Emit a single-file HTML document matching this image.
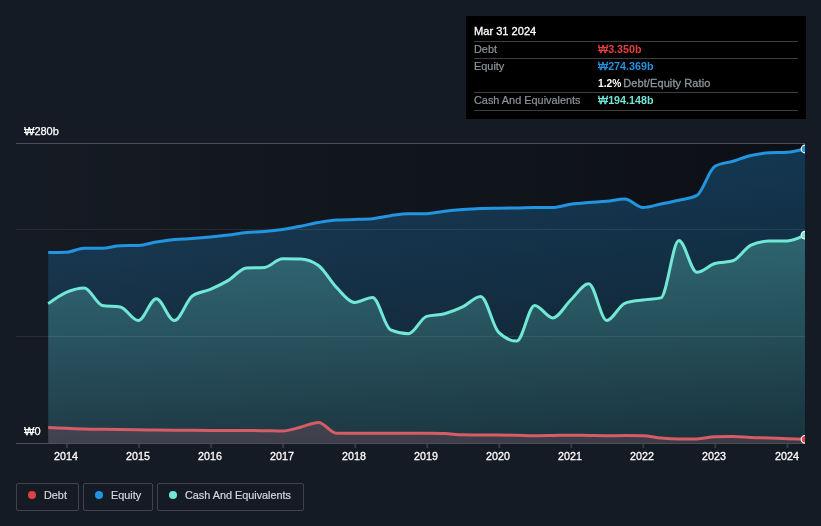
<!DOCTYPE html>
<html lang="en">
<head>
<meta charset="utf-8">
<title>Debt to Equity History</title>
<style>
html,body{margin:0;padding:0;}
body{width:821px;height:526px;background:#151b24;overflow:hidden;position:relative;font-family:"Liberation Sans","Noto Sans CJK KR",sans-serif;color:#fff;}
svg{position:absolute;left:0;top:0;}
.ylab,.xlab,.tip span,.tip .title,.legend{will-change:opacity;opacity:0.999;}
.ylab{position:absolute;left:24px;font-size:11px;line-height:12px;color:#fff;white-space:nowrap;-webkit-text-stroke:0.25px #fff;}
.xlab{position:absolute;top:449.2px;width:60px;margin-left:-30px;text-align:center;font-size:11px;line-height:14px;color:#fff;transform:scaleX(0.975);-webkit-text-stroke:0.3px #fff;}
.tip{position:absolute;left:466px;top:16px;width:340px;height:103px;background:#000;}
.tip .title{position:absolute;left:8px;top:8.3px;font-size:11px;line-height:14px;color:#fff;transform:scaleX(1.008);transform-origin:0 0;white-space:nowrap;-webkit-text-stroke:0.3px #fff;}
.tip .ln{position:absolute;left:8px;right:8px;height:1px;background:#3b3e43;}
.tip span{position:absolute;white-space:nowrap;transform-origin:0 0;font-size:11px;line-height:14px;}
.tip .k{left:8px;color:#90969d;-webkit-text-stroke:0.2px #90969d;transform:scaleX(0.99);}
.tip .r{left:157.2px;color:#90969d;-webkit-text-stroke:0.3px #90969d;letter-spacing:0.1px;}
.tip .v i{font-style:normal;font-weight:normal;-webkit-text-stroke:0.3px;}
.tip .v{left:131.7px;font-weight:bold;transform:scaleX(0.975);}
.legend{position:absolute;top:483px;height:26px;border:1px solid #3f444d;border-radius:2px;font-size:11px;line-height:14px;color:#d5d8dc;box-sizing:content-box;}
.legend i{position:absolute;left:11px;top:7px;width:8px;height:8px;border-radius:50%;}
.legend span{position:absolute;-webkit-text-stroke:0.2px #d5d8dc;left:26.8px;top:4.1px;white-space:nowrap;transform:scaleX(0.985);transform-origin:0 0;}
</style>
</head>
<body>
<svg width="821" height="526" viewBox="0 0 821 526">
<defs>
<linearGradient id="bgG" x1="0" y1="0" x2="1" y2="0"><stop offset="0" stop-color="#000" stop-opacity="0"/><stop offset="1" stop-color="#000" stop-opacity="0.42"/></linearGradient>
<linearGradient id="eqG" x1="0" y1="143" x2="0" y2="443" gradientUnits="userSpaceOnUse"><stop offset="0" stop-color="#2394df" stop-opacity="0.30"/><stop offset="1" stop-color="#2394df" stop-opacity="0.10"/></linearGradient>
<linearGradient id="caG" x1="0" y1="143" x2="0" y2="443" gradientUnits="userSpaceOnUse"><stop offset="0" stop-color="#71e7d6" stop-opacity="0.38"/><stop offset="1" stop-color="#71e7d6" stop-opacity="0.10"/></linearGradient>
<linearGradient id="deG" x1="0" y1="143" x2="0" y2="443" gradientUnits="userSpaceOnUse"><stop offset="0" stop-color="#f06478" stop-opacity="0.16"/><stop offset="1" stop-color="#f06478" stop-opacity="0.16"/></linearGradient>
<clipPath id="clip"><rect x="16" y="138" width="789" height="312"/></clipPath>
</defs>
<rect x="16" y="143" width="789" height="300" fill="url(#bgG)"/>
<g clip-path="url(#clip)">
<path d="M48.20,252.60C54.21,252.55,60.21,252.50,66.22,252.30C72.23,252.10,78.23,248.20,84.24,248.20C90.24,248.20,96.25,248.20,102.26,248.20C108.26,248.20,114.27,245.83,120.28,245.70C126.28,245.57,132.29,245.63,138.30,245.50C144.30,245.37,150.31,243.00,156.31,242.00C162.32,241.00,168.33,240.08,174.33,239.50C180.34,238.92,186.35,238.92,192.35,238.50C198.36,238.08,204.37,237.58,210.37,237.00C216.38,236.42,222.38,235.75,228.39,235.00C234.40,234.25,240.40,233.08,246.41,232.50C252.42,231.92,258.42,232.00,264.43,231.50C270.43,231.00,276.44,230.38,282.45,229.50C288.45,228.62,294.46,227.37,300.47,226.20C306.47,225.03,312.48,223.53,318.49,222.50C324.49,221.47,330.50,220.33,336.50,220.00C342.51,219.67,348.52,219.72,354.52,219.50C360.53,219.28,366.54,219.23,372.54,218.70C378.55,218.17,384.56,216.53,390.56,215.70C396.57,214.87,402.57,213.70,408.58,213.70C414.59,213.70,420.59,213.70,426.60,213.70C432.61,213.70,438.61,211.90,444.62,211.20C450.63,210.50,456.63,209.95,462.64,209.50C468.64,209.05,474.65,208.70,480.66,208.50C486.66,208.30,492.67,208.28,498.68,208.20C504.68,208.12,510.69,208.12,516.70,208.00C522.70,207.88,528.71,207.50,534.71,207.50C540.72,207.50,546.73,207.50,552.73,207.50C558.74,207.50,564.75,205.03,570.75,204.20C576.76,203.37,582.77,202.98,588.77,202.50C594.78,202.02,600.78,201.87,606.79,201.30C612.80,200.73,618.80,199.10,624.81,199.10C630.82,199.10,636.82,207.50,642.83,207.50C648.83,207.50,654.84,205.22,660.85,204.00C666.85,202.78,672.86,201.63,678.87,200.20C684.87,198.77,690.88,198.60,696.89,195.40C702.89,192.20,708.90,169.70,714.90,166.30C720.91,162.90,726.92,163.00,732.92,161.20C738.93,159.40,744.94,156.90,750.94,155.50C756.95,154.10,762.96,153.13,768.96,152.80C774.97,152.47,780.97,152.63,786.98,152.30C792.99,151.97,798.99,150.43,805.00,148.90L805.00,443L48.20,443Z" fill="url(#eqG)"/>
<path d="M48.20,303.70C54.21,299.36,60.21,295.02,66.22,292.40C72.23,289.78,78.23,288.00,84.24,288.00C90.24,288.00,96.25,304.33,102.26,305.40C108.26,306.47,114.27,305.93,120.28,307.00C126.28,308.07,132.29,320.60,138.30,320.60C144.30,320.60,150.31,298.70,156.31,298.70C162.32,298.70,168.33,320.60,174.33,320.60C180.34,320.60,186.35,300.40,192.35,296.00C198.36,291.60,204.37,292.00,210.37,289.40C216.38,286.80,222.38,283.98,228.39,280.40C234.40,276.82,240.40,268.23,246.41,267.90C252.42,267.57,258.42,267.73,264.43,267.40C270.43,267.07,276.44,258.80,282.45,258.80C288.45,258.80,294.46,258.83,300.47,258.90C306.47,258.97,312.48,261.10,318.49,265.50C324.49,269.90,330.50,281.25,336.50,287.40C342.51,293.55,348.52,302.40,354.52,302.40C360.53,302.40,366.54,297.40,372.54,297.40C378.55,297.40,384.56,327.37,390.56,329.90C396.57,332.43,402.57,333.70,408.58,333.70C414.59,333.70,420.59,318.20,426.60,316.40C432.61,314.60,438.61,315.28,444.62,313.70C450.63,312.12,456.63,309.77,462.64,306.90C468.64,304.03,474.65,296.50,480.66,296.50C486.66,296.50,492.67,326.60,498.68,332.40C504.68,338.20,510.69,341.10,516.70,341.10C522.70,341.10,528.71,305.40,534.71,305.40C540.72,305.40,546.73,317.90,552.73,317.90C558.74,317.90,564.75,305.70,570.75,300.00C576.76,294.30,582.77,283.70,588.77,283.70C594.78,283.70,600.78,320.50,606.79,320.50C612.80,320.50,618.80,305.50,624.81,303.30C630.82,301.10,636.82,300.90,642.83,300.00C648.83,299.10,654.84,299.30,660.85,297.90C666.85,296.50,672.86,240.50,678.87,240.50C684.87,240.50,690.88,272.30,696.89,272.30C702.89,272.30,708.90,265.30,714.90,263.50C720.91,261.70,726.92,262.60,732.92,260.80C738.93,259.00,744.94,247.77,750.94,245.10C756.95,242.43,762.96,241.10,768.96,241.10C774.97,241.10,780.97,241.10,786.98,241.10C792.99,241.10,798.99,238.15,805.00,235.20L805.00,443L48.20,443Z" fill="url(#caG)"/>
<path d="M48.20,427.50C54.21,427.78,60.21,428.05,66.22,428.30C72.23,428.55,78.23,428.83,84.24,429.00C90.24,429.17,96.25,429.22,102.26,429.30C108.26,429.38,114.27,429.42,120.28,429.50C126.28,429.58,132.29,429.72,138.30,429.80C144.30,429.88,150.31,429.93,156.31,430.00C162.32,430.07,168.33,430.15,174.33,430.20C180.34,430.25,186.35,430.27,192.35,430.30C198.36,430.33,204.37,430.37,210.37,430.40C216.38,430.43,222.38,430.50,228.39,430.50C234.40,430.50,240.40,430.50,246.41,430.50C252.42,430.50,258.42,430.62,264.43,430.70C270.43,430.78,276.44,431.00,282.45,431.00C288.45,431.00,294.46,428.62,300.47,427.20C306.47,425.78,312.48,422.50,318.49,422.50C324.49,422.50,330.50,433.20,336.50,433.20C342.51,433.20,348.52,433.20,354.52,433.20C360.53,433.20,366.54,433.20,372.54,433.20C378.55,433.20,384.56,433.20,390.56,433.20C396.57,433.20,402.57,433.20,408.58,433.20C414.59,433.20,420.59,433.23,426.60,433.30C432.61,433.37,438.61,433.40,444.62,433.60C450.63,433.80,456.63,434.67,462.64,434.80C468.64,434.93,474.65,435.00,480.66,435.00C486.66,435.00,492.67,435.00,498.68,435.00C504.68,435.00,510.69,435.18,516.70,435.30C522.70,435.42,528.71,435.70,534.71,435.70C540.72,435.70,546.73,435.58,552.73,435.50C558.74,435.42,564.75,435.20,570.75,435.20C576.76,435.20,582.77,435.42,588.77,435.50C594.78,435.58,600.78,435.70,606.79,435.70C612.80,435.70,618.80,435.60,624.81,435.60C630.82,435.60,636.82,435.67,642.83,435.80C648.83,435.93,654.84,437.48,660.85,438.00C666.85,438.52,672.86,438.90,678.87,438.90C684.87,438.90,690.88,438.90,696.89,438.90C702.89,438.90,708.90,436.90,714.90,436.70C720.91,436.50,726.92,436.40,732.92,436.40C738.93,436.40,744.94,437.33,750.94,437.60C756.95,437.87,762.96,437.82,768.96,438.00C774.97,438.18,780.97,438.50,786.98,438.70C792.99,438.90,798.99,439.05,805.00,439.20L805.00,443L48.20,443Z" fill="url(#deG)"/>
<g stroke="#ffffff" stroke-opacity="0.085" stroke-width="1">
<line x1="16" x2="805" y1="229.5" y2="229.5"/>
<line x1="16" x2="805" y1="336.5" y2="336.5"/>
</g>
<line x1="16" x2="805" y1="143.5" y2="143.5" stroke="#4a4f57" stroke-width="1"/>
<line x1="16" x2="805" y1="443.5" y2="443.5" stroke="#4a4f57" stroke-width="1"/>
<path d="M48.20,252.60C54.21,252.55,60.21,252.50,66.22,252.30C72.23,252.10,78.23,248.20,84.24,248.20C90.24,248.20,96.25,248.20,102.26,248.20C108.26,248.20,114.27,245.83,120.28,245.70C126.28,245.57,132.29,245.63,138.30,245.50C144.30,245.37,150.31,243.00,156.31,242.00C162.32,241.00,168.33,240.08,174.33,239.50C180.34,238.92,186.35,238.92,192.35,238.50C198.36,238.08,204.37,237.58,210.37,237.00C216.38,236.42,222.38,235.75,228.39,235.00C234.40,234.25,240.40,233.08,246.41,232.50C252.42,231.92,258.42,232.00,264.43,231.50C270.43,231.00,276.44,230.38,282.45,229.50C288.45,228.62,294.46,227.37,300.47,226.20C306.47,225.03,312.48,223.53,318.49,222.50C324.49,221.47,330.50,220.33,336.50,220.00C342.51,219.67,348.52,219.72,354.52,219.50C360.53,219.28,366.54,219.23,372.54,218.70C378.55,218.17,384.56,216.53,390.56,215.70C396.57,214.87,402.57,213.70,408.58,213.70C414.59,213.70,420.59,213.70,426.60,213.70C432.61,213.70,438.61,211.90,444.62,211.20C450.63,210.50,456.63,209.95,462.64,209.50C468.64,209.05,474.65,208.70,480.66,208.50C486.66,208.30,492.67,208.28,498.68,208.20C504.68,208.12,510.69,208.12,516.70,208.00C522.70,207.88,528.71,207.50,534.71,207.50C540.72,207.50,546.73,207.50,552.73,207.50C558.74,207.50,564.75,205.03,570.75,204.20C576.76,203.37,582.77,202.98,588.77,202.50C594.78,202.02,600.78,201.87,606.79,201.30C612.80,200.73,618.80,199.10,624.81,199.10C630.82,199.10,636.82,207.50,642.83,207.50C648.83,207.50,654.84,205.22,660.85,204.00C666.85,202.78,672.86,201.63,678.87,200.20C684.87,198.77,690.88,198.60,696.89,195.40C702.89,192.20,708.90,169.70,714.90,166.30C720.91,162.90,726.92,163.00,732.92,161.20C738.93,159.40,744.94,156.90,750.94,155.50C756.95,154.10,762.96,153.13,768.96,152.80C774.97,152.47,780.97,152.63,786.98,152.30C792.99,151.97,798.99,150.43,805.00,148.90" fill="none" stroke="#2394df" stroke-width="3" stroke-linejoin="round"/>
<path d="M48.20,303.70C54.21,299.36,60.21,295.02,66.22,292.40C72.23,289.78,78.23,288.00,84.24,288.00C90.24,288.00,96.25,304.33,102.26,305.40C108.26,306.47,114.27,305.93,120.28,307.00C126.28,308.07,132.29,320.60,138.30,320.60C144.30,320.60,150.31,298.70,156.31,298.70C162.32,298.70,168.33,320.60,174.33,320.60C180.34,320.60,186.35,300.40,192.35,296.00C198.36,291.60,204.37,292.00,210.37,289.40C216.38,286.80,222.38,283.98,228.39,280.40C234.40,276.82,240.40,268.23,246.41,267.90C252.42,267.57,258.42,267.73,264.43,267.40C270.43,267.07,276.44,258.80,282.45,258.80C288.45,258.80,294.46,258.83,300.47,258.90C306.47,258.97,312.48,261.10,318.49,265.50C324.49,269.90,330.50,281.25,336.50,287.40C342.51,293.55,348.52,302.40,354.52,302.40C360.53,302.40,366.54,297.40,372.54,297.40C378.55,297.40,384.56,327.37,390.56,329.90C396.57,332.43,402.57,333.70,408.58,333.70C414.59,333.70,420.59,318.20,426.60,316.40C432.61,314.60,438.61,315.28,444.62,313.70C450.63,312.12,456.63,309.77,462.64,306.90C468.64,304.03,474.65,296.50,480.66,296.50C486.66,296.50,492.67,326.60,498.68,332.40C504.68,338.20,510.69,341.10,516.70,341.10C522.70,341.10,528.71,305.40,534.71,305.40C540.72,305.40,546.73,317.90,552.73,317.90C558.74,317.90,564.75,305.70,570.75,300.00C576.76,294.30,582.77,283.70,588.77,283.70C594.78,283.70,600.78,320.50,606.79,320.50C612.80,320.50,618.80,305.50,624.81,303.30C630.82,301.10,636.82,300.90,642.83,300.00C648.83,299.10,654.84,299.30,660.85,297.90C666.85,296.50,672.86,240.50,678.87,240.50C684.87,240.50,690.88,272.30,696.89,272.30C702.89,272.30,708.90,265.30,714.90,263.50C720.91,261.70,726.92,262.60,732.92,260.80C738.93,259.00,744.94,247.77,750.94,245.10C756.95,242.43,762.96,241.10,768.96,241.10C774.97,241.10,780.97,241.10,786.98,241.10C792.99,241.10,798.99,238.15,805.00,235.20" fill="none" stroke="#71e7d6" stroke-width="3" stroke-linejoin="round"/>
<path d="M48.20,427.50C54.21,427.78,60.21,428.05,66.22,428.30C72.23,428.55,78.23,428.83,84.24,429.00C90.24,429.17,96.25,429.22,102.26,429.30C108.26,429.38,114.27,429.42,120.28,429.50C126.28,429.58,132.29,429.72,138.30,429.80C144.30,429.88,150.31,429.93,156.31,430.00C162.32,430.07,168.33,430.15,174.33,430.20C180.34,430.25,186.35,430.27,192.35,430.30C198.36,430.33,204.37,430.37,210.37,430.40C216.38,430.43,222.38,430.50,228.39,430.50C234.40,430.50,240.40,430.50,246.41,430.50C252.42,430.50,258.42,430.62,264.43,430.70C270.43,430.78,276.44,431.00,282.45,431.00C288.45,431.00,294.46,428.62,300.47,427.20C306.47,425.78,312.48,422.50,318.49,422.50C324.49,422.50,330.50,433.20,336.50,433.20C342.51,433.20,348.52,433.20,354.52,433.20C360.53,433.20,366.54,433.20,372.54,433.20C378.55,433.20,384.56,433.20,390.56,433.20C396.57,433.20,402.57,433.20,408.58,433.20C414.59,433.20,420.59,433.23,426.60,433.30C432.61,433.37,438.61,433.40,444.62,433.60C450.63,433.80,456.63,434.67,462.64,434.80C468.64,434.93,474.65,435.00,480.66,435.00C486.66,435.00,492.67,435.00,498.68,435.00C504.68,435.00,510.69,435.18,516.70,435.30C522.70,435.42,528.71,435.70,534.71,435.70C540.72,435.70,546.73,435.58,552.73,435.50C558.74,435.42,564.75,435.20,570.75,435.20C576.76,435.20,582.77,435.42,588.77,435.50C594.78,435.58,600.78,435.70,606.79,435.70C612.80,435.70,618.80,435.60,624.81,435.60C630.82,435.60,636.82,435.67,642.83,435.80C648.83,435.93,654.84,437.48,660.85,438.00C666.85,438.52,672.86,438.90,678.87,438.90C684.87,438.90,690.88,438.90,696.89,438.90C702.89,438.90,708.90,436.90,714.90,436.70C720.91,436.50,726.92,436.40,732.92,436.40C738.93,436.40,744.94,437.33,750.94,437.60C756.95,437.87,762.96,437.82,768.96,438.00C774.97,438.18,780.97,438.50,786.98,438.70C792.99,438.90,798.99,439.05,805.00,439.20" fill="none" stroke="#d85c65" stroke-width="3" stroke-linejoin="round"/>
<circle cx="805" cy="149" r="3.8" fill="#2394df" stroke="#fff" stroke-width="1.2"/>
<circle cx="805" cy="235.2" r="3.8" fill="#71e7d6" stroke="#fff" stroke-width="1.2"/>
<circle cx="805" cy="439.3" r="3.8" fill="#e64141" stroke="#fff" stroke-width="1.2"/>
</g>
<g fill="#4a4f57" fill-opacity="0.6">
<rect x="66.00" y="444" width="2" height="4"/>
<rect x="138.05" y="444" width="2" height="4"/>
<rect x="210.10" y="444" width="2" height="4"/>
<rect x="282.15" y="444" width="2" height="4"/>
<rect x="354.20" y="444" width="2" height="4"/>
<rect x="426.25" y="444" width="2" height="4"/>
<rect x="498.30" y="444" width="2" height="4"/>
<rect x="570.35" y="444" width="2" height="4"/>
<rect x="642.40" y="444" width="2" height="4"/>
<rect x="714.45" y="444" width="2" height="4"/>
<rect x="786.50" y="444" width="2" height="4"/>
</g>
</svg>
<div class="ylab" style="top:125px">₩280b</div>
<div class="ylab" style="top:425px">₩0</div>
<div class="xlab" style="left:66.00px">2014</div>
<div class="xlab" style="left:138.05px">2015</div>
<div class="xlab" style="left:210.10px">2016</div>
<div class="xlab" style="left:282.15px">2017</div>
<div class="xlab" style="left:354.20px">2018</div>
<div class="xlab" style="left:426.25px">2019</div>
<div class="xlab" style="left:498.30px">2020</div>
<div class="xlab" style="left:570.35px">2021</div>
<div class="xlab" style="left:642.40px">2022</div>
<div class="xlab" style="left:714.45px">2023</div>
<div class="xlab" style="left:786.50px">2024</div>
<div class="tip">
<div class="title">Mar 31 2024</div>
<div class="ln" style="top:25px"></div>
<div class="ln" style="top:42px"></div>
<div class="ln" style="top:76px"></div>
<div class="ln" style="top:94px"></div>
<span class="k" style="top:26px">Debt</span><span class="v" style="top:26px;color:#e64141"><i>₩</i>3.350b</span>
<span class="k" style="top:43px">Equity</span><span class="v" style="top:43px;color:#2394df"><i>₩</i>274.369b</span>
<span class="v" style="top:60px;color:#fff;transform:scaleX(0.93)">1.2%</span><span class="r" style="top:60px">Debt/Equity Ratio</span>
<span class="k" style="top:77px">Cash And Equivalents</span><span class="v" style="top:77px;color:#71e7d6"><i>₩</i>194.148b</span>
</div>
<div class="legend" style="left:16px;width:61px"><i style="background:#e64141"></i><span>Debt</span></div>
<div class="legend" style="left:83px;width:68px"><i style="background:#2394df"></i><span>Equity</span></div>
<div class="legend" style="left:157px;width:145px"><i style="background:#71e7d6"></i><span>Cash And Equivalents</span></div>
</body>
</html>
